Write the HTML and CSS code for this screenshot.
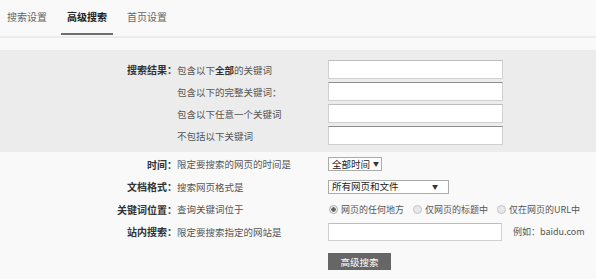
FILE: index.html
```html
<!DOCTYPE html>
<html lang="zh-CN">
<head>
    <meta charset="UTF-8">
    <title>高级搜索</title>
    <link rel="stylesheet" href="styles.css">
</head>
<body>

    <section id="tabs">
        <a class="tab" href="#">搜索设置</a>
        <a class="tab active" href="#">高级搜索</a>
        <a class="tab" href="#">首页设置</a>
    </section>

    <section id="keywords">
        <div class="row">
            <span class="label">搜索结果：</span>
            <span class="desc">包含以下<b>全部</b>的关键词</span>
            <span class="field"><input type="text" class="text-input"></span>
        </div>
        <div class="row">
            <span class="label"></span>
            <span class="desc">包含以下的完整关键词：</span>
            <span class="field"><input type="text" class="text-input dark-top"></span>
        </div>
        <div class="row">
            <span class="label"></span>
            <span class="desc">包含以下任意一个关键词</span>
            <span class="field"><input type="text" class="text-input"></span>
        </div>
        <div class="row">
            <span class="label"></span>
            <span class="desc">不包括以下关键词</span>
            <span class="field"><input type="text" class="text-input dark-top"></span>
        </div>
    </section>

    <section id="options">
        <div class="row">
            <span class="label">时间：</span>
            <span class="desc">限定要搜索的网页的时间是</span>
            <span class="field">
                <span class="dropdown small">全部时间<i class="arrow">▼</i></span>
            </span>
        </div>
        <div class="row">
            <span class="label">文档格式：</span>
            <span class="desc">搜索网页格式是</span>
            <span class="field">
                <span class="dropdown wide">所有网页和文件<i class="arrow">▼</i></span>
            </span>
        </div>
        <div class="row">
            <span class="label">关键词位置：</span>
            <span class="desc">查询关键词位于</span>
            <span class="field radios">
                <label class="radio checked"><span class="dot"></span>网页的任何地方</label>
                <label class="radio"><span class="dot"></span>仅网页的标题中</label>
                <label class="radio"><span class="dot"></span>仅在网页的URL中</label>
            </span>
        </div>
        <div class="row">
            <span class="label">站内搜索：</span>
            <span class="desc">限定要搜索指定的网站是</span>
            <span class="field">
                <input type="text" class="text-input site">
                <span class="example">例如：baidu.com</span>
            </span>
        </div>
        <div class="submit-row">
            <button type="button" class="search-button">高级搜索</button>
        </div>
    </section>

</body>
</html>
```

FILE: styles.css
```css
* {
    margin: 0;
    padding: 0;
    box-sizing: border-box;
    font-family: 'Noto Sans CJK SC', 'Liberation Sans', sans-serif;
}

body {
    background-color: #f9f9f9;
    color: #555;
    width: 596px;
    height: 279px;
    overflow: hidden;
}

#tabs {
    display: flex;
    gap: 8px;
    padding-left: 1px;
    height: 38px;
    border-bottom: 2px solid #ececec;
}

.tab {
    display: flex;
    align-items: center;
    padding: 0 6px;
    font-size: 10px;
    color: #666;
    text-decoration: none;
    border-bottom: 2px solid transparent;
    margin-bottom: 1px;
}

.tab.active {
    color: #222;
    font-weight: bold;
    border-bottom-color: #6e6e6e;
}

#keywords {
    margin-top: 12px;
    padding: 10px 0 7px;
    background-color: #ececec;
    display: flex;
    flex-direction: column;
    gap: 3px;
}

#keywords .row {
    height: 19px;
}

.row {
    display: grid;
    grid-template-columns: 177px 151px 1fr;
    align-items: center;
    white-space: nowrap;
}

.label {
    text-align: right;
    font-size: 10px;
    font-weight: bold;
    color: #333;
}

.desc {
    font-size: 9.5px;
    color: #555;
}

.desc b {
    color: #333;
}

.field {
    display: flex;
    align-items: center;
    height: 100%;
}

.text-input {
    width: 175px;
    height: 19px;
    background: #fff;
    border: 1px solid #d0d0d0;
    border-top-color: #bdbdbd;
    outline: none;
}

.text-input.dark-top {
    border-top-color: #8e8e8e;
}

#options {
    padding-top: 1px;
}

#options .row {
    height: 22.5px;
}

.dropdown {
    display: flex;
    align-items: center;
    justify-content: space-between;
    height: 14px;
    padding: 0 5px 0 3px;
    background: #fff;
    border: 1px solid #aaa;
    font-size: 9.5px;
    line-height: 1;
    color: #222;
}

.dropdown.small {
    width: 54px;
}

.dropdown.wide {
    width: 121px;
    padding-right: 10px;
}

.arrow {
    font-style: normal;
    font-size: 6px;
    color: #333;
    margin-left: 3px;
}

.radios {
    gap: 9px;
    padding-left: 1px;
}

.radio {
    display: flex;
    align-items: center;
    gap: 3px;
    font-size: 9px;
    color: #555;
}

.dot {
    width: 9px;
    height: 9px;
    border-radius: 50%;
    border: 1px solid #c4c4c4;
    background: #e8e8e8;
}

.radio.checked .dot {
    background: radial-gradient(circle, #666 0 2px, #f4f4f4 2.5px);
    border-color: #aaa;
}

.text-input.site {
    height: 18px;
    width: 174px;
}

.example {
    margin-left: 11px;
    font-size: 9px;
    color: #555;
}

.submit-row {
    display: flex;
    padding: 10px 0 0 328px;
}

.search-button {
    width: 63px;
    height: 17px;
    background-color: #666;
    color: #fff;
    border: none;
    font-size: 9.5px;
    cursor: pointer;
}
```
